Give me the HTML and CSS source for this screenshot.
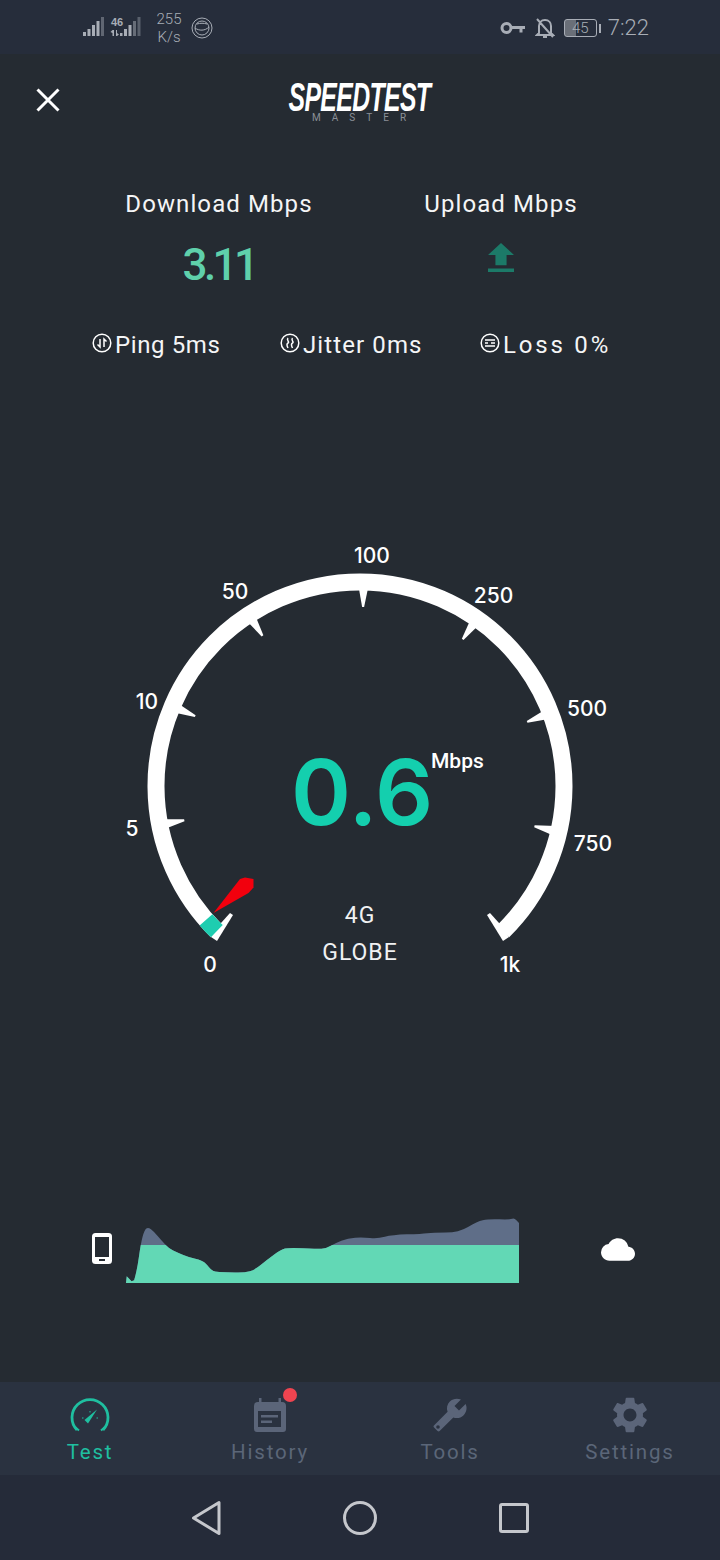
FILE: index.html
```html
<!DOCTYPE html>
<html lang="en">
<head>
<meta charset="utf-8">
<title>Speedtest Master</title>
<link rel="stylesheet" href="styles.css">
</head>
<body>
<div class="app">
  <div class="status">
    <div class="status-left">
      <svg class="sig" width="62" height="24" viewBox="0 0 62 24">
        <g fill="#a8adb6">
          <rect x="0" y="16" width="3" height="4"/><rect x="4.500" y="13" width="3" height="7"/><rect x="9" y="9" width="3" height="11"/><rect x="13.500" y="5" width="3" height="15"/>
          <rect x="18" y="1" width="3" height="19" opacity=".45"/>
          <rect x="41" y="13" width="3" height="7"/><rect x="45.500" y="9" width="3" height="11"/><rect x="50" y="5" width="3" height="15" opacity=".5"/><rect x="54.500" y="1" width="3" height="19" opacity=".4"/>
          <path d="M29.500 14v6h1.500v-6zM27.500 16l2-2v3zM33 14v6h1v-6zM34 17l2 1.500-2 1.500zM37 17h2.500v3H37z"/>
        </g>
        <text class="sig-text" x="28" y="10">46</text>
      </svg>
      <div class="rate"><span>255</span><span>K/s</span></div>
      <svg class="orb" width="22" height="22" viewBox="0 0 22 22" fill="none" stroke="#a8adb6">
        <circle cx="11" cy="11" r="10"/><circle cx="11" cy="11" r="7"/><path d="M4 11c4 3 10 3 14-1M6 7c3-1 7-1 10 0"/>
      </svg>
    </div>
    <div class="status-right">
      <svg width="26" height="14" viewBox="0 0 26 14" fill="none" stroke="#a8adb6" stroke-width="3">
        <circle cx="6.500" cy="7" r="4.500"/><path d="M11 6.500h14M21 6.500v5"/>
      </svg>
      <svg width="20" height="22" viewBox="0 0 20 22" fill="none" stroke="#a8adb6" stroke-width="2">
        <path d="M4 16V9c0-3 2-6 6-6s6 3 6 6v7l2 2H2zM8 20h4M2 2l16 18"/>
      </svg>
      <div class="battery"><span class="battery-text">45</span></div>
      <span class="battery-tip"></span>
      <span class="clock">7:22</span>
    </div>
  </div>

  <div class="main">
    <header class="top">
      <svg class="close" width="24" height="24" viewBox="0 0 24 24" fill="none" stroke="#fff" stroke-width="3">
        <path d="M1.500 1.500l21 21M22.500 1.500l-21 21"/>
      </svg>
      <div class="logo">
        <span class="logo-main">SPEEDTEST</span>
        <span class="logo-sub">MASTER</span>
      </div>
    </header>

    <section class="speeds">
      <div class="label">Download Mbps</div>
      <div class="label">Upload Mbps</div>
      <div class="value">3.11</div>
      <div class="value-icon">
        <svg width="26" height="29" viewBox="5 3 14 17" preserveAspectRatio="none"><path fill="#1c7a68" d="M9 16h6v-6h4l-7-7-7 7h4zm-4 2h14v2H5z"/></svg>
      </div>
    </section>

    <section class="metrics">
      <div class="metric">
        <svg class="metric-icon" width="20" height="20" viewBox="0 0 20 20" fill="none" stroke="#fff" stroke-width="1.500"><circle cx="10" cy="10" r="8.800"/><path d="M8 6v8L5.500 11.500M12 14V6l2.500 2.500"/></svg>
        <span>Ping 5ms</span>
      </div>
      <div class="metric">
        <svg class="metric-icon" width="20" height="20" viewBox="0 0 20 20" fill="none" stroke="#fff" stroke-width="1.500"><circle cx="10" cy="10" r="8.800"/><path d="M8 5c-2 2 2 4 0 5s-1 3 0 5M12.500 5c-2 2 2 4 0 5s-1 3 0 5"/></svg>
        <span class="jitter">Jitter 0ms</span>
      </div>
      <div class="metric">
        <svg class="metric-icon" width="20" height="20" viewBox="0 0 20 20" fill="none" stroke="#fff" stroke-width="1.500"><circle cx="10" cy="10" r="8.800"/><path d="M5 7h10M5 10h3M11 10h4M5 13h10"/></svg>
        <span class="loss">Loss 0%</span>
      </div>
    </section>

    <svg class="gauge" width="720" height="460" viewBox="0 530 720 460">
      <path d="M216.800 931.200A204 204 0 1 1 503.200 931.200" fill="none" stroke="#fff" stroke-width="17"/>
      <g fill="#fff">
        <polygon points="355,586 365,586 361,607 359,607" transform="rotate(1 360 786)"/>
        <polygon points="355,586 365,586 361,607 359,607" transform="rotate(-33 360 786)"/>
        <polygon points="355,586 365,586 361,607 359,607" transform="rotate(-67 360 786)"/>
        <polygon points="355,586 365,586 361,607 359,607" transform="rotate(-101 360 786)"/>
        <polygon points="355,586 365,586 361,607 359,607" transform="rotate(35 360 786)"/>
        <polygon points="355,586 365,586 361,607 359,607" transform="rotate(69 360 786)"/>
        <polygon points="355,586 365,586 361,607 359,607" transform="rotate(103 360 786)"/>
        <polygon points="221,923 230,913 233,915 217,941 211,937"/>
        <polygon points="499,923 490,913 487,915 503,941 509,937"/>
      </g>
      <path d="M216.800 931.200A204 204 0 0 1 206 919.800" fill="none" stroke="#1ecdb0" stroke-width="17"/>
      <polygon points="213.500,913 240,879 245,877.500 253.500,879 253.500,887.500 248.500,893" fill="#f2000d"/>
      <g class="tick-label">
        <text x="372" y="563">100</text>
        <text x="235" y="599">50</text>
        <text x="493.500" y="603">250</text>
        <text x="147" y="709">10</text>
        <text x="587" y="716">500</text>
        <text x="132" y="836">5</text>
        <text x="593" y="851">750</text>
        <text x="210" y="972">0</text>
        <text x="510" y="972">1k</text>
      </g>
      <text class="speed" x="362" y="825">0.6</text>
      <text class="unit" x="431" y="768">Mbps</text>
      <text class="net" x="360" y="923">4G</text>
      <text class="net" x="360" y="960">GLOBE</text>
    </svg>

    <section class="chart-row">
      <svg class="phone" width="20" height="31" viewBox="0 0 20 31">
        <rect width="20" height="31" rx="3.500" fill="#fff"/>
        <rect x="3" y="4" width="14" height="20" fill="#252b32"/>
        <rect x="7" y="26" width="6" height="2" fill="#252b32"/>
      </svg>
      <svg class="chart" width="393" height="65" viewBox="150 55 1063 193" preserveAspectRatio="none">
        <defs>
          <clipPath id="cap"><rect x="150" y="135" width="1063" height="113"/></clipPath>
          <path id="curve" d="M150 248L152 228 165 243 172 240Q180 210 185 170Q190 130 195 110Q200 90 205 86Q210 82 217.500 88.500Q225 95 235 107.500Q245 120 255 132.500Q265 145 277.500 151.500Q290 158 305 165Q320 172 337.500 176Q355 180 362.500 187.500Q370 195 377.500 205Q385 215 402.500 215.500Q420 216 445 217Q470 218 485 213Q500 208 515 194Q530 180 550 164Q570 148 580 145.500Q590 143 627.500 144.500Q665 146 677.500 146.500Q690 147 702.500 138.500Q715 130 732.500 122.500Q750 115 770 113.500Q790 112 810 114.500Q830 117 850 111Q870 105 910 103.500Q950 102 965 100Q980 98 1015 98Q1050 98 1075 81.500Q1100 65 1115 61.500Q1130 58 1160 59Q1190 60 1195 57.500Q1200 55 1206 62L1213 70V248Z"/>
        </defs>
        <use href="#curve" fill="#5f6e88"/>
        <use href="#curve" fill="#62d8b5" clip-path="url(#cap)"/>
      </svg>
      <svg class="cloud" width="34" height="23" viewBox="0 4 24 16"><path fill="#fff" d="M19.350 10.040A7.490 7.490 0 0 0 12 4C9.110 4 6.600 5.640 5.350 8.040A5.994 5.994 0 0 0 0 14c0 3.310 2.690 6 6 6h13c2.760 0 5-2.240 5-5 0-2.640-2.050-4.780-4.650-4.960z"/></svg>
    </section>
  </div>

  <nav class="tabs">
    <div class="tab active">
      <svg class="tab-icon" width="40" height="36" viewBox="0 0 40 36" fill="none" stroke="#1fbfa0" stroke-width="2.800">
        <path d="M7 33A18 18 0 1 1 33 33"/>
        <path d="M5 30l4 3.500M35 30l-4 3.500" stroke-width="2"/>
        <path d="M20 14v1.500M12 21h1.500M28 21h-1.500" stroke-width="1"/>
        <polygon points="14.500,23 18,26.500 27,12.500" fill="#1fbfa0" stroke="none"/>
      </svg>
      <span>Test</span>
    </div>
    <div class="tab">
      <span class="tab-icon-wrap">
        <svg class="tab-icon" width="32" height="36" viewBox="0 0 32 36">
          <path fill="#5b6579" d="M5 1h2.500v4h17V1H27v4h1a4 4 0 0 1 4 4v23a3 3 0 0 1-3 3H3a3 3 0 0 1-3-3V9a4 4 0 0 1 4-4h1z"/>
          <rect x="4" y="14" width="23" height="16" fill="#2a3240"/>
          <path d="M7 18h17v2.500H7zM7 23.500h11V26H7z" fill="#5b6579"/>
        </svg>
        <i class="dot"></i>
      </span>
      <span>History</span>
    </div>
    <div class="tab">
      <svg class="tab-icon" width="36" height="36" viewBox="0 0 24 24">
        <g transform="translate(24 0) scale(-1 1)">
          <path fill="#5b6579" d="M22.700 19l-9.100-9.100c.9-2.300.4-5-1.500-6.900-2-2-5-2.400-7.400-1.300L9 6 6 9 1.600 4.700C.4 7.100.9 10.100 2.900 12.100c1.900 1.900 4.600 2.400 6.900 1.500l9.100 9.100c.4.400 1 .4 1.400 0l2.300-2.300c.5-.4.500-1.100.1-1.400z"/>
          <circle cx="20" cy="20" r="1.200" fill="#2a3240"/>
        </g>
      </svg>
      <span>Tools</span>
    </div>
    <div class="tab">
      <svg class="tab-icon" width="36" height="36" viewBox="2 2 20 20">
        <path fill="#5b6579" d="M19.140 12.940c.04-.3.06-.61.06-.94 0-.32-.02-.64-.07-.94l2.030-1.580a.49.49 0 0 0 .12-.61l-1.920-3.320a.488.488 0 0 0-.59-.22l-2.390.96c-.5-.38-1.030-.7-1.620-.94l-.36-2.540a.484.484 0 0 0-.48-.41h-3.840c-.24 0-.43.17-.47.41l-.36 2.540c-.59.24-1.130.57-1.620.94l-2.390-.96c-.22-.08-.47 0-.59.22L2.740 8.870c-.12.21-.08.47.12.61l2.030 1.580c-.05.3-.09.63-.09.94s.02.64.07.94l-2.030 1.580a.49.49 0 0 0-.12.61l1.920 3.320c.12.22.37.29.59.22l2.390-.96c.5.38 1.030.7 1.620.94l.36 2.540c.05.24.24.41.48.41h3.840c.24 0 .44-.17.47-.41l.36-2.540c.59-.24 1.130-.56 1.620-.94l2.390.96c.22.08.47 0 .59-.22l1.920-3.320c.12-.22.07-.47-.12-.61l-2.010-1.580zM12 15.600c-1.980 0-3.600-1.620-3.600-3.600s1.620-3.600 3.600-3.600 3.600 1.620 3.600 3.600-1.620 3.600-3.600 3.600z"/>
      </svg>
      <span>Settings</span>
    </div>
  </nav>

  <div class="navbar">
    <svg width="30" height="36" viewBox="0 0 30 36" fill="none" stroke="#c5c7cc" stroke-width="3" stroke-linejoin="round"><path d="M28 2.500V33.500L2.500 18z"/></svg>
    <svg width="34" height="34" viewBox="0 0 34 34" fill="none" stroke="#c5c7cc" stroke-width="3"><circle cx="17" cy="17" r="15.500"/></svg>
    <svg width="30" height="30" viewBox="0 0 30 30" fill="none" stroke="#c5c7cc" stroke-width="3"><rect x="1.500" y="1.500" width="27" height="27" rx="1.500"/></svg>
  </div>
</div>
</body>
</html>
```
FILE: styles.css
```css
* { box-sizing: border-box; }
html, body { margin: 0; padding: 0; }
body { background: #252b32; font-family: Roboto, "Liberation Sans", sans-serif; color: #fff; }
.app { width: 720px; height: 1560px; display: flex; flex-direction: column; overflow: hidden; }

.status { height: 54px; flex: none; background: #262d3b; display: flex; align-items: center; justify-content: space-between; padding: 2px 71px 0 83px; color: #a8adb6; }
.status-left, .status-right { display: flex; align-items: center; }
.sig { margin-right: 11px; }
.sig-text { font: 700 11px "Liberation Sans", Roboto, sans-serif; fill: #a8adb6; }
.rate { display: flex; flex-direction: column; align-items: center; font: 300 15px/18px Roboto, sans-serif; width: 26px; margin-right: 9px; }
.orb { display: block; }
.status-right svg { margin-right: 9px; }
.battery { width: 33px; height: 18px; border: 1px solid #a8adb6; border-radius: 3px; background: linear-gradient(90deg, #6a6f78 35%, transparent 35%); display: flex; align-items: center; justify-content: center; }
.battery-text { font: 300 15px/1 Roboto, sans-serif; }
.battery-tip { width: 2px; height: 9px; background: #a8adb6; margin: 0 7px 0 2px; }
.clock { font: 300 22px/1 Roboto, sans-serif; }

.main { flex: 1; display: flex; flex-direction: column; }
.top { height: 92px; flex: none; position: relative; display: flex; justify-content: center; align-items: flex-start; padding-top: 28px; }
.close { position: absolute; left: 36px; top: 34px; }
.logo { display: flex; flex-direction: column; align-items: center; margin-left: -2px; }
.logo-main { display: block; font: italic 700 40px/30px "Liberation Sans", sans-serif; letter-spacing: -1px; white-space: nowrap; transform: scaleX(.62); }
.logo-sub { font: 400 10px/11px Roboto, sans-serif; letter-spacing: 11px; margin-right: -11px; color: #8b9097; }

.speeds { margin-top: 43px; padding: 0 78px; display: grid; grid-template-columns: 282px 282px; grid-template-rows: 30px 60px; row-gap: 16px; justify-items: center; align-items: center; }
.label { font-size: 24px; line-height: 30px; letter-spacing: 1.100px; color: #f4f5f6; }
.value { font-size: 44px; font-weight: 500; letter-spacing: -3.500px; color: #5fd0ab; }
.value-icon { display: flex; margin-top: -15px; }

.metrics { margin-top: 35px; height: 30px; padding-left: 92px; display: grid; grid-template-columns: 188px 200px 130px; align-items: center; }
.metric { display: flex; align-items: center; gap: 3px; font-size: 24px; line-height: 30px; letter-spacing: .6px; color: #f4f5f6; white-space: nowrap; }
.jitter { letter-spacing: 1.100px; }
.loss { letter-spacing: 2.800px; }
.metric-icon { margin-top: -5px; flex: none; }

.gauge { display: block; margin-top: 170px; flex: none; }
.tick-label text { font: 500 21px Inter, Roboto, sans-serif; fill: #fff; text-anchor: middle; }
.speed { font: 600 91px Inter, Roboto, sans-serif; fill: #14cfae; text-anchor: middle; }
.unit { font: 500 21px Roboto, sans-serif; fill: #fff; }
.net { font: 400 23px Roboto, sans-serif; letter-spacing: 1px; fill: #f0f1f2; text-anchor: middle; }

.chart-row { margin-top: 228px; height: 65px; padding-left: 92px; display: flex; align-items: center; }
.phone { margin-right: 14px; margin-top: -4px; }
.chart { margin-right: 82px; }
.cloud { margin-top: -2px; }

.tabs { height: 93px; flex: none; background: #2a3240; display: grid; grid-template-columns: repeat(4, 180px); padding-top: 15px; }
.tab { display: flex; flex-direction: column; align-items: center; font-size: 20.500px; line-height: 26px; letter-spacing: 1.800px; color: #5b6678; }
.tab.active { color: #1fbfa0; }
.tab-icon { display: block; }
.tab-icon-wrap { position: relative; display: block; }
.tab > .tab-icon, .tab-icon-wrap { margin-bottom: 6px; }
.dot { position: absolute; right: -11px; top: -9px; width: 14px; height: 14px; border-radius: 50%; background: #ef4450; }

.navbar { height: 85px; flex: none; background: #252b39; display: grid; grid-template-columns: 30px 34px 30px; justify-content: center; column-gap: 122px; align-items: center; padding-top: 1px; }
```
